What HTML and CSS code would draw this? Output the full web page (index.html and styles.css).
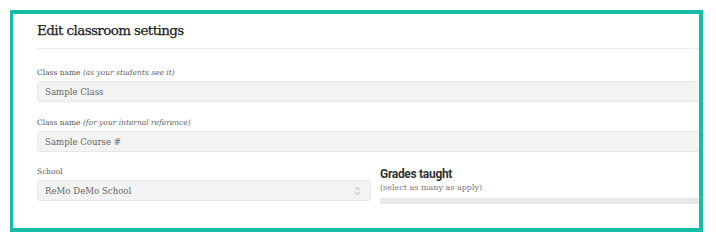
FILE: index.html
```html
<!DOCTYPE html>
<html lang="en">
<head>
  <meta charset="UTF-8">
  <title>Edit classroom settings</title>
  <link rel="stylesheet" href="styles.css">
</head>
<body>
  <div class="frame">
    <div class="panel">
      <div class="panel-header">
        <h1>Edit classroom settings</h1>
      </div>

      <div class="form">
        <div class="field">
          <label>Class name <em>(as your students see it)</em></label>
          <div class="input">Sample Class</div>
        </div>

        <div class="field">
          <label>Class name <em>(for your internal reference)</em></label>
          <div class="input">Sample Course #</div>
        </div>

        <div class="row">
          <div class="field school">
            <label>School</label>
            <div class="input select">
              <span>ReMo DeMo School</span>
              <svg width="7" height="10" viewBox="0 0 7 10">
                <path d="M1.5 3.5 L3.5 1.5 L5.5 3.5 M1.5 6.5 L3.5 8.5 L5.5 6.5" fill="none" stroke="#aaa" stroke-width="1"/>
              </svg>
            </div>
          </div>

          <div class="grades">
            <h3>Grades taught</h3>
            <div class="hint">(select as many as apply)</div>
            <div class="grade-bar"></div>
          </div>
        </div>
      </div>
    </div>
  </div>
</body>
</html>
```

FILE: styles.css
```css
body {
  margin: 0;
  background-color: #fff;
  font-family: "DejaVu Serif", serif;
}

.frame {
  box-sizing: border-box;
  width: 693px;
  height: 222px;
  margin: 10px 0 0 10px;
  border: 4px solid #17bca8;
  border-left-width: 3px;
  overflow: hidden;
  background-color: #fff;
}

.panel {
  width: 720px;
  padding: 6px 0 0 24px;
}

.panel-header {
  padding-bottom: 8px;
  border-bottom: 1px solid #ececec;
}

.panel-header h1 {
  margin: 0;
  font-size: 13.5px;
  line-height: 20px;
  font-weight: normal;
  color: #1e1e1e;
  letter-spacing: -0.6px;
  -webkit-text-stroke: 0.25px #1e1e1e;
}

.form {
  display: flex;
  flex-direction: column;
  gap: 15px;
  padding-top: 18px;
}

.field {
  display: flex;
  flex-direction: column;
  gap: 3px;
}

.field label {
  font-size: 7.5px;
  line-height: 11px;
  color: #555;
}

.field label em {
  color: #666;
}

.input {
  box-sizing: border-box;
  height: 21px;
  padding: 0 7px;
  display: flex;
  align-items: center;
  background-color: #f3f3f3;
  border: 1px solid #e7e7e7;
  border-radius: 3px;
  font-size: 8.6px;
  color: #666;
}

.row {
  display: flex;
  gap: 9px;
  margin-top: -1px;
}

.school {
  width: 334px;
  flex: none;
}

.select {
  justify-content: space-between;
  padding-right: 9px;
}

.grades {
  flex: 1;
  display: flex;
  flex-direction: column;
}

.grades h3 {
  margin: 0;
  font-family: Roboto, "Liberation Sans", sans-serif;
  font-size: 12px;
  line-height: 16px;
  font-weight: bold;
  color: #333;
  letter-spacing: -0.3px;
}

.hint {
  font-size: 8px;
  line-height: 12px;
  color: #777;
}

.grade-bar {
  height: 6px;
  margin-top: 4px;
  background-color: #e8e8e8;
  border-radius: 3px 3px 0 0;
}
```
